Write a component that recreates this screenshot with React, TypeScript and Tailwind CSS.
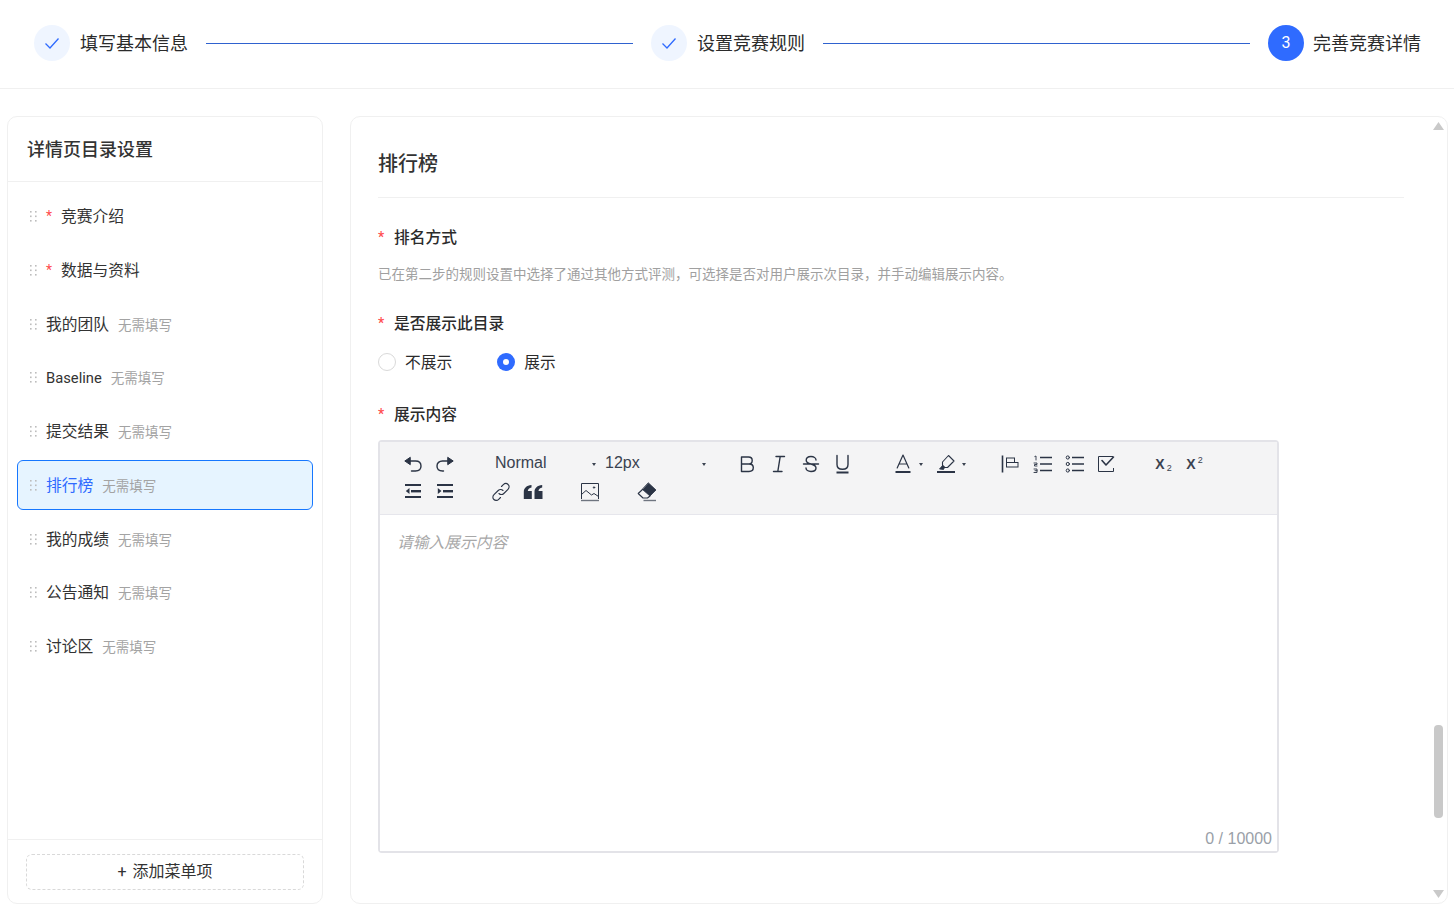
import React from "react";

const I = ({ children, w = 18, h = 18, vb = "0 0 18 18" }: { children: React.ReactNode; w?: number; h?: number; vb?: string }) => (
  <svg width={w} height={h} viewBox={vb} fill="none" stroke="#2b3445" strokeWidth="1.4" strokeLinecap="round" strokeLinejoin="round">
    {children}
  </svg>
);

const Btn = ({ children, className = "w-8" }: { children?: React.ReactNode; className?: string }) => (
  <div className={`flex h-7 items-center justify-center ${className}`}>{children}</div>
);

const Caret = () => (
  <svg width="4" height="3" viewBox="0 0 4 3" className="shrink-0">
    <path d="M0 0h4L2 3z" fill="#3a4250" />
  </svg>
);

const Handle = () => (
  <svg width="7" height="11" viewBox="0 0 7 11" className="ml-px shrink-0">
    {[0, 4.5, 9].map((y) =>
      [0, 5].map((x) => <rect key={`${x}-${y}`} x={x} y={y} width="1.6" height="1.6" fill="#bdbdbd" />)
    )}
  </svg>
);

const Check = () => (
  <svg width="16" height="16" viewBox="0 0 16 16" fill="none" stroke="#2f6bff" strokeWidth="1.3">
    <path d="M1.5 8.5 L6 13 L14.5 3.5" />
  </svg>
);

const Step = ({ label, n }: { label: string; n?: string }) => (
  <div className="flex shrink-0 items-center">
    <div
      className={`flex h-9 w-9 items-center justify-center rounded-full ${n ? "bg-[#2f6bff] text-white" : "bg-[#eff5ff]"} text-[16px]`}
    >
      {n ?? <Check />}
    </div>
    <span className={`mt-[2px] text-[18px] leading-[26px] text-[#2b2b2b] ${n ? "ml-[9px]" : "ml-[10px]"}`}>{label}</span>
  </div>
);

const items: { label: string; req?: boolean; tag?: boolean; active?: boolean }[] = [
  { label: "竞赛介绍", req: true },
  { label: "数据与资料", req: true },
  { label: "我的团队", tag: true },
  { label: "Baseline", tag: true },
  { label: "提交结果", tag: true },
  { label: "排行榜", tag: true, active: true },
  { label: "我的成绩", tag: true },
  { label: "公告通知", tag: true },
  { label: "讨论区", tag: true },
];

const Label = ({ children }: { children: React.ReactNode }) => (
  <div className="flex h-6 items-center text-[15.75px] font-medium text-[#2b2b2b]">
    <span className="w-4 text-[14px] text-[#ff4d4f]">*</span>
    <span className="mt-[2px]">{children}</span>
  </div>
);

export default function App() {
  return (
    <div
      className="flex h-[918px] w-full flex-col overflow-hidden bg-white"
      style={{ fontFamily: 'Roboto, "Noto Sans CJK SC", "Noto Sans", sans-serif' }}
    >
      <header className="flex h-[89px] shrink-0 items-center border-b border-[#f0f0f0] pb-[2px] pl-[34px] pr-[33px]">
        <Step label="填写基本信息" />
        <div className="mx-[18px] h-px flex-1 bg-[#2f62cf]" />
        <Step label="设置竞赛规则" />
        <div className="mx-[18px] h-px flex-1 bg-[#2f62cf]" />
        <Step label="完善竞赛详情" n="3" />
      </header>

      <main className="flex min-h-0 flex-1 gap-[27px] pb-[14px] pl-[7px] pr-[6px] pt-[27px]">
        <aside className="flex w-[316px] shrink-0 flex-col rounded-[10px] border border-[#f0f0f0]">
          <div className="flex h-[65px] shrink-0 items-center border-b border-[#f0f0f0] pl-[19px] pt-[2px] text-[18px] font-medium leading-[26px] text-[#333]">
            详情页目录设置
          </div>
          <div className="flex flex-1 flex-col gap-[3.75px] px-[9px] pt-[9.5px]">
            {items.map((it) => (
              <div
                key={it.label}
                className={`flex h-[50px] items-center rounded-[6px] border pl-[11px] ${
                  it.active ? "border-[#1677ff] bg-[#e6f4ff]" : "border-transparent"
                }`}
              >
                <Handle />
                {it.req && <span className="ml-[9px] w-[15px] text-[14px] text-[#ff4d4f]">*</span>}
                <span
                  className={`mt-px leading-6 ${it.label === "Baseline" ? "text-[14.75px]" : "text-[15.75px]"} ${it.req ? "" : "ml-[9px]"} ${
                    it.active ? "text-[#2f6bff]" : "text-[#333]"
                  }`}
                >
                  {it.label}
                </span>
                {it.tag && <span className="mt-px ml-[9px] text-[13.5px] leading-5 text-[#a3a3a3]">无需填写</span>}
              </div>
            ))}
          </div>
          <div className="flex h-[64px] shrink-0 items-start border-t border-[#f0f0f0] px-[18px] pt-[14px]">
            <div className="flex h-9 w-full items-center justify-center rounded-[6px] border border-dashed border-[#d9d9d9] text-[16px] text-[#333]">
              <span className="mr-[6px]">+</span>添加菜单项
            </div>
          </div>
        </aside>

        <section className="relative min-w-0 flex-1 rounded-[10px] border border-[#f0f0f0] pl-[27px] pr-[43px]">
          <div className="h-[81px] border-b border-[#f0f0f0] pt-[33px] text-[20px] font-medium leading-7 text-[#333]">
            排行榜
          </div>
          <div className="mt-[27px]">
            <Label>排名方式</Label>
          </div>
          <p className="mt-[15px] text-[13.5px] leading-[20px] text-[#a0a0a0]">
            已在第二步的规则设置中选择了通过其他方式评测，可选择是否对用户展示次目录，并手动编辑展示内容。
          </p>
          <div className="mt-[27px]">
            <Label>是否展示此目录</Label>
          </div>
          <div className="mt-[15px] flex h-6 items-center text-[15.75px] text-[#2b2b2b]">
            <span className="h-[18px] w-[18px] rounded-full border border-[#d9d9d9] bg-white" />
            <span className="mt-px ml-[9px]">不展示</span>
            <span className="ml-[45px] flex h-[18px] w-[18px] items-center justify-center rounded-full bg-[#2f6bff]">
              <span className="h-[6px] w-[6px] rounded-full bg-white" />
            </span>
            <span className="mt-px ml-[9px]">展示</span>
          </div>
          <div className="mt-[28px]">
            <Label>展示内容</Label>
          </div>

          <div
            className="mt-[14px] flex h-[413px] w-[901px] flex-col rounded-[4px] border-2 border-[#e3e3e8]"
            style={{ fontFamily: '"Liberation Sans", sans-serif' }}
          >
            <div className="flex h-[73px] shrink-0 flex-col border-b border-[#e6e6ec] bg-[#f4f4f5] pl-[17px] pt-[8px] text-[#3a4250]">
              <div className="flex h-7 items-center">
                <Btn>
                  <I>
                    <path d="M6 2.5 L0.8 6 L6 9.5 Z" fill="#2b3445" strokeWidth="1" />
                    <path d="M6 6 H11.5 C14.8 6 17 8 17 11 C17 14 14.8 16 11.5 16 H7.5" />
                  </I>
                </Btn>
                <Btn>
                  <I>
                    <path d="M12 2.5 L17.2 6 L12 9.5 Z" fill="#2b3445" strokeWidth="1" />
                    <path d="M12 6 H6.5 C3.2 6 1 8 1 11 C1 14 3.2 16 6.5 16 H7.5" />
                  </I>
                </Btn>
                <div className="ml-[26px] flex w-[110px] items-center justify-between pl-2 pr-[1px] text-[16px]">
                  <span className="-mt-[2px]">Normal</span>
                  <Caret />
                </div>
                <div className="flex w-[112px] items-center justify-between pl-2 pr-[3px] text-[16px]">
                  <span className="-mt-[2px]">12px</span>
                  <Caret />
                </div>
                <Btn className="ml-[22px] w-8">
                  <I w={20} h={20} vb="0 0 20 20">
                    <path d="M4.5 3 V17.5 H12 C14.8 17.5 16.3 15.8 16.3 13.6 C16.3 11.4 14.8 10 12 10 H4.5 M12 10 C13.9 10 15.2 8.6 15.2 6.5 C15.2 4.4 13.8 3 11.5 3 H4.5" />
                  </I>
                </Btn>
                <Btn>
                  <I w={20} h={20} vb="0 0 20 20">
                    <path d="M7 2.5 H15.5 M4.5 17.5 H13 M11.2 2.5 L8.8 17.5" />
                  </I>
                </Btn>
                <Btn>
                  <I w={20} h={20} vb="0 0 20 20">
                    <path d="M2.5 10 H17.5 M15 6 C15 4 12.8 2.5 10 2.5 C7.2 2.5 5.2 4 5.2 6.3 C5.2 8.5 7.2 9.4 10 10 C12.8 10.7 15 11.6 15 14 C15 16.1 12.8 17.5 10 17.5 C7.2 17.5 5 16 5 14" />
                  </I>
                </Btn>
                <Btn>
                  <I w={20} h={20} vb="0 0 20 20">
                    <path d="M4 1.5 V10.5 C4 13.8 6.3 15.3 9.5 15.3 C12.7 15.3 15 13.8 15 10.5 V1.5" />
                    <path d="M3.5 18.5 H15.5" strokeWidth="2" strokeLinecap="butt" />
                  </I>
                </Btn>
                <Btn className="ml-[28px] w-8">
                  <I w={20} h={20} vb="0 0 20 20">
                    <path d="M4.2 14 L10 1 L15.8 14 M6.2 10 H13.8" strokeWidth="1.2" />
                    <path d="M2.5 18 H17.5" strokeWidth="2" strokeLinecap="butt" />
                  </I>
                </Btn>
                <Caret />
                <Btn className="ml-[7px] w-8">
                  <I w={20} h={20} vb="0 0 20 20">
                    <path d="M12.5 1.5 L18 7 L11.5 13.5 H8.5 L6.5 11.5 V8 Z" strokeWidth="1.1" />
                    <path d="M6.5 11.5 L3.5 15 L7.5 15.5 L8.5 13.5 Z" fill="#2b3445" strokeWidth="0.8" />
                    <path d="M1 18 H19" strokeWidth="2" strokeLinecap="butt" />
                  </I>
                </Btn>
                <Caret />
                <Btn className="ml-[28px] w-8">
                  <I w={20} h={20} vb="0 0 20 20">
                    <path d="M2.5 1.5 V18.5" strokeWidth="1.6" strokeLinecap="butt" />
                    <rect x="6.5" y="4" width="8" height="4.5" strokeWidth="1" strokeLinejoin="miter" />
                    <rect x="6.5" y="8.5" width="11.5" height="4.5" strokeWidth="1" strokeLinejoin="miter" />
                  </I>
                </Btn>
                <Btn className="ml-px w-[32px]">
                  <I w={20} h={20} vb="0 0 20 20">
                    <path d="M7 3.5 H19 M7 10 H19 M7 16.5 H19" strokeWidth="1.6" strokeLinecap="butt" />
                    <path d="M1.8 2.5 L3 2 V6 M1 9 H4 V10.5 H1.5 V12 H4 M1 15 H4 V18.5 H1 M2 16.7 H4" strokeWidth="0.9" />
                  </I>
                </Btn>
                <Btn className="w-[31px]">
                  <I w={20} h={20} vb="0 0 20 20">
                    <path d="M7 3.5 H19 M7 10 H19 M7 16.5 H19" strokeWidth="1.6" strokeLinecap="butt" />
                    <circle cx="2.8" cy="3.5" r="1.6" strokeWidth="1" />
                    <circle cx="2.8" cy="10" r="1.6" strokeWidth="1" />
                    <circle cx="2.8" cy="16.5" r="1.6" strokeWidth="1" />
                  </I>
                </Btn>
                <Btn className="w-[31px]">
                  <I w={20} h={20} vb="0 0 20 20">
                    <path d="M17 2.5 H2.5 V17.5 H17.5 V14" strokeWidth="1" strokeLinecap="butt" strokeLinejoin="miter" />
                    <path d="M6 6.5 L10 11 L17.5 3" strokeWidth="1.6" />
                  </I>
                </Btn>
                <div className="ml-[27px] flex w-[31px] items-baseline justify-center text-[#3a4250]">
                  <span className="text-[14px] font-bold leading-none">X</span>
                  <span className="relative top-[2px] ml-[2px] text-[9px] leading-none">2</span>
                </div>
                <div className="flex w-[31px] items-baseline justify-center text-[#3a4250]">
                  <span className="text-[14px] font-bold leading-none">X</span>
                  <span className="relative -top-[6px] ml-[2px] text-[9px] leading-none">2</span>
                </div>
              </div>
              <div className="flex h-7 items-center">
                <Btn>
                  <svg width="16" height="14" viewBox="0 0 16 14" fill="#2b3445" className="-mt-[2px]">
                    <rect x="0" y="0" width="16" height="2" />
                    <rect x="6" y="6" width="10" height="2.4" />
                    <rect x="0" y="12" width="16" height="2" />
                    <path d="M4.5 4 V10 L0.8 7 Z" />
                  </svg>
                </Btn>
                <Btn>
                  <svg width="16" height="14" viewBox="0 0 16 14" fill="#2b3445" className="-mt-[2px]">
                    <rect x="0" y="0" width="16" height="2" />
                    <rect x="6" y="6" width="10" height="2.4" />
                    <rect x="0" y="12" width="16" height="2" />
                    <path d="M0.8 4 V10 L4.5 7 Z" />
                  </svg>
                </Btn>
                <Btn className="ml-[24px] w-8">
                  <I w={20} h={20} vb="0 0 20 20">
                    <path d="M8 11.5 C9.4 13 11.5 12.8 12.8 11.5 L17 7.3 C18.5 5.8 18.5 3.7 17.1 2.5 C15.8 1.2 13.7 1.3 12.3 2.7 L10.5 4.5" strokeWidth="1.1" />
                    <path d="M12 8.5 C10.6 7 8.5 7.2 7.2 8.5 L3 12.7 C1.5 14.2 1.5 16.3 2.9 17.5 C4.2 18.8 6.3 18.7 7.7 17.3 L9.5 15.5" strokeWidth="1.1" />
                  </I>
                </Btn>
                <Btn>
                  <svg width="20" height="16" viewBox="0 0 20 16" fill="#2b3445">
                    <path d="M8.5 1 V3.6 C6.2 4 5 5.2 4.8 7 H8.8 V15 H0.8 V8 C0.8 4 3.6 1.4 8.5 1 Z" />
                    <path d="M19.2 1 V3.6 C16.9 4 15.7 5.2 15.5 7 H19.5 V15 H11.5 V8 C11.5 4 14.3 1.4 19.2 1 Z" />
                  </svg>
                </Btn>
                <Btn className="ml-[25px] w-8">
                  <I w={20} h={20} vb="0 0 20 20">
                    <path d="M1.5 17 V1.5 H18.5 V17" strokeWidth="1" strokeLinecap="butt" strokeLinejoin="miter" />
                    <path d="M1.5 12.5 L6 8.5 L11.5 13 L14 11.5 L18.5 14.5" strokeWidth="1" />
                    <circle cx="14" cy="5.5" r="0.8" fill="#2b3445" strokeWidth="0.6" />
                    <path d="M1 18.5 H19" strokeWidth="1.4" stroke="#6f7580" strokeLinecap="butt" />
                  </I>
                </Btn>
                <Btn className="ml-[25px] w-8">
                  <I w={20} h={20} vb="0 0 20 20">
                    <path d="M11.5 1 L19 8 L13 14 L5.5 7.5 Z" fill="#2b3445" strokeWidth="0.8" />
                    <path d="M5.5 7.5 L1.2 11.5 L6 16 H10.5 L13 14" strokeWidth="1.1" />
                    <path d="M6.5 18.5 H19" strokeWidth="1.4" stroke="#6f7580" strokeLinecap="butt" />
                  </I>
                </Btn>
              </div>
            </div>
            <div className="relative flex-1 bg-white px-[17px] pt-[15px]">
              <span
                className="text-[15.75px] italic leading-6 text-[#a8a8a8]"
                style={{ fontFamily: '"Noto Sans CJK SC", sans-serif' }}
              >
                请输入展示内容
              </span>
              <span className="absolute bottom-[3px] right-[5px] text-[16px] leading-[18px] text-[#9a9fa8]">0 / 10000</span>
            </div>
          </div>

          <svg width="11" height="8" viewBox="0 0 11 8" className="absolute right-[3.5px] top-[5px]">
            <path d="M0 8 L5.5 0 L11 8 Z" fill="#c9c9c9" />
          </svg>
          <div className="absolute right-[4px] top-[608px] h-[93px] w-[9px] rounded-[4px] bg-[#c9c9c9]" />
          <svg width="11" height="8" viewBox="0 0 11 8" className="absolute bottom-[5px] right-[3.5px]">
            <path d="M0 0 L11 0 L5.5 8 Z" fill="#c9c9c9" />
          </svg>
        </section>
      </main>
    </div>
  );
}
